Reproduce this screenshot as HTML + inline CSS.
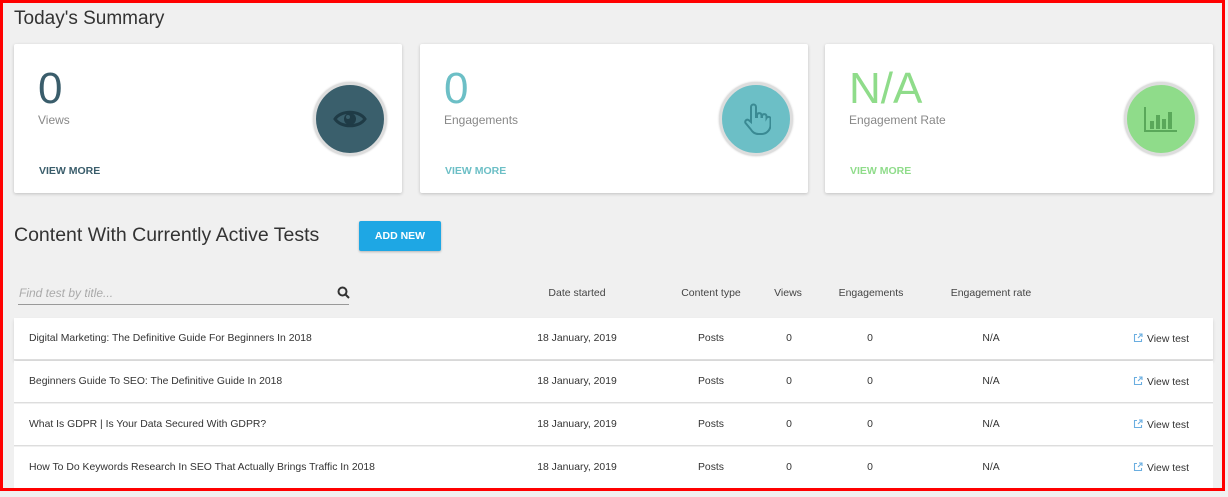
<!DOCTYPE html>
<html><head><style>
*{margin:0;padding:0;box-sizing:border-box}
body{width:1228px;height:497px;background:#f0f0f0;font-family:"Liberation Sans",sans-serif;position:relative;overflow:hidden}
.frame{position:absolute;left:0;top:0;width:1225px;height:491px;border:3px solid #f00;overflow:hidden}
.abs{position:absolute}
h1{position:absolute;left:11px;top:5px;font-size:19px;font-weight:normal;color:#333}
.card{position:absolute;top:41px;width:388px;height:149px;background:#fff;border-radius:2px;box-shadow:0 1px 3px rgba(0,0,0,.2)}
.num{position:absolute;left:24px;top:20px;font-size:44px;line-height:50px}
.lbl{position:absolute;left:24px;top:69px;font-size:12px;color:#888}
.vm{position:absolute;left:25px;top:121px;font-size:10.5px;font-weight:bold}
.circ{position:absolute;left:299px;top:38px;width:74px;height:74px;border-radius:50%;border:3px solid #ddd;box-shadow:0 0 2px rgba(0,0,0,.2);display:flex;align-items:center;justify-content:center}
h2{position:absolute;left:11px;top:221px;font-size:19.5px;font-weight:normal;color:#333}
.btn{position:absolute;left:356px;top:218px;width:82px;height:30px;background:#1ea7e4;color:#fff;font-size:10.5px;font-weight:bold;text-align:center;line-height:30px;border-radius:2px;box-shadow:0 1px 2px rgba(0,0,0,.25)}
.search{position:absolute;left:15px;top:280px;width:331px;height:22px;border-bottom:1px solid #999;font-size:12px;font-style:italic;color:#aaa;padding-left:1px;line-height:20px}
.th{position:absolute;top:284px;font-size:10.5px;color:#444;text-align:center}
.row{position:absolute;left:11px;width:1199px;height:42px;background:#fff;border-bottom:1px solid #ddd;font-size:10.4px;color:#333}
.row span{position:absolute;top:15px}
.c{text-align:center;width:140px;margin-left:-70px}
.vt{left:1119px}
.vt svg{vertical-align:-1px;margin-right:4px}
</style></head><body>
<div class="frame">
<h1>Today's Summary</h1>
<div class="card" style="left:11px">
 <div class="num" style="color:#3a5d6b">0</div><div class="lbl">Views</div><div class="vm" style="color:#3a5d6b">VIEW MORE</div>
 <div class="circ" style="background:#3a5f6c"><svg width="34" height="22" viewBox="0 0 34 22"><path d="M2 11C8 2 26 2 32 11C26 20 8 20 2 11Z" fill="none" stroke="#1f3b46" stroke-width="3"/><circle cx="17" cy="11" r="6" fill="#1f3b46"/><circle cx="15" cy="9" r="2" fill="#3a5f6c"/></svg></div>
</div>
<div class="card" style="left:417px">
 <div class="num" style="color:#6cbfc6">0</div><div class="lbl">Engagements</div><div class="vm" style="color:#6cbfc6">VIEW MORE</div>
 <div class="circ" style="background:#6cbfc6"><svg width="30" height="34" viewBox="0 0 30 34"><path d="M10 20V5a2.5 2.5 0 0 1 5 0v10h1v-2a2.3 2.3 0 0 1 4.5 0v2h.5v-1a2.3 2.3 0 0 1 4.5 0v2a2.3 2.3 0 0 1 4 0v7c0 5-4 9-9 9h-3c-4 0-6-2-8-5l-5-6c-1-2 1-4 3-3z" fill="none" stroke="#3a8a93" stroke-width="2"/></svg></div>
</div>
<div class="card" style="left:822px">
 <div class="num" style="color:#8fdc8a">N/A</div><div class="lbl">Engagement Rate</div><div class="vm" style="color:#8fdc8a">VIEW MORE</div>
 <div class="circ" style="background:#8fdc8a"><svg width="36" height="28" viewBox="0 0 36 28"><path d="M2 2V26H34" fill="none" stroke="#5aa85a" stroke-width="2"/><rect x="7" y="16" width="4" height="8" fill="#5aa85a"/><rect x="13" y="10" width="4" height="14" fill="#5aa85a"/><rect x="19" y="14" width="4" height="10" fill="#5aa85a"/><rect x="25" y="7" width="4" height="17" fill="#5aa85a"/></svg></div>
</div>
<h2>Content With Currently Active Tests</h2>
<div class="btn">ADD NEW</div>
<div class="search">Find test by title...<svg class="abs" style="left:319px;top:3px" width="13" height="13" viewBox="0 0 13 13"><circle cx="5.5" cy="5.5" r="4" fill="none" stroke="#333" stroke-width="2"/><path d="M8.5 8.5L12 12" stroke="#333" stroke-width="2"/></svg></div>
<div class="th" style="left:504px;width:140px">Date started</div>
<div class="th" style="left:638px;width:140px">Content type</div>
<div class="th" style="left:725px;width:120px">Views</div>
<div class="th" style="left:808px;width:120px">Engagements</div>
<div class="th" style="left:918px;width:140px">Engagement rate</div>

<div class="row" style="top:315px;box-shadow:0 2px 3px rgba(0,0,0,.12)"><span style="left:15px">Digital Marketing: The Definitive Guide For Beginners In 2018</span><span class="c" style="left:563px">18 January, 2019</span><span class="c" style="left:697px">Posts</span><span class="c" style="left:775px">0</span><span class="c" style="left:856px">0</span><span class="c" style="left:977px">N/A</span><span class="vt"><svg width="10" height="10" viewBox="0 0 10 10"><path d="M4 1.5H1.5V8.5H8.5V6M5 5L9 1M6 1H9V4" fill="none" stroke="#6aaee0" stroke-width="1.1"/></svg>View test</span></div>
<div class="row" style="top:358px"><span style="left:15px">Beginners Guide To SEO: The Definitive Guide In 2018</span><span class="c" style="left:563px">18 January, 2019</span><span class="c" style="left:697px">Posts</span><span class="c" style="left:775px">0</span><span class="c" style="left:856px">0</span><span class="c" style="left:977px">N/A</span><span class="vt"><svg width="10" height="10" viewBox="0 0 10 10"><path d="M4 1.5H1.5V8.5H8.5V6M5 5L9 1M6 1H9V4" fill="none" stroke="#6aaee0" stroke-width="1.1"/></svg>View test</span></div>
<div class="row" style="top:401px"><span style="left:15px">What Is GDPR | Is Your Data Secured With GDPR?</span><span class="c" style="left:563px">18 January, 2019</span><span class="c" style="left:697px">Posts</span><span class="c" style="left:775px">0</span><span class="c" style="left:856px">0</span><span class="c" style="left:977px">N/A</span><span class="vt"><svg width="10" height="10" viewBox="0 0 10 10"><path d="M4 1.5H1.5V8.5H8.5V6M5 5L9 1M6 1H9V4" fill="none" stroke="#6aaee0" stroke-width="1.1"/></svg>View test</span></div>
<div class="row" style="top:444px"><span style="left:15px">How To Do Keywords Research In SEO That Actually Brings Traffic In 2018</span><span class="c" style="left:563px">18 January, 2019</span><span class="c" style="left:697px">Posts</span><span class="c" style="left:775px">0</span><span class="c" style="left:856px">0</span><span class="c" style="left:977px">N/A</span><span class="vt"><svg width="10" height="10" viewBox="0 0 10 10"><path d="M4 1.5H1.5V8.5H8.5V6M5 5L9 1M6 1H9V4" fill="none" stroke="#6aaee0" stroke-width="1.1"/></svg>View test</span></div>
</div>
</body></html>
